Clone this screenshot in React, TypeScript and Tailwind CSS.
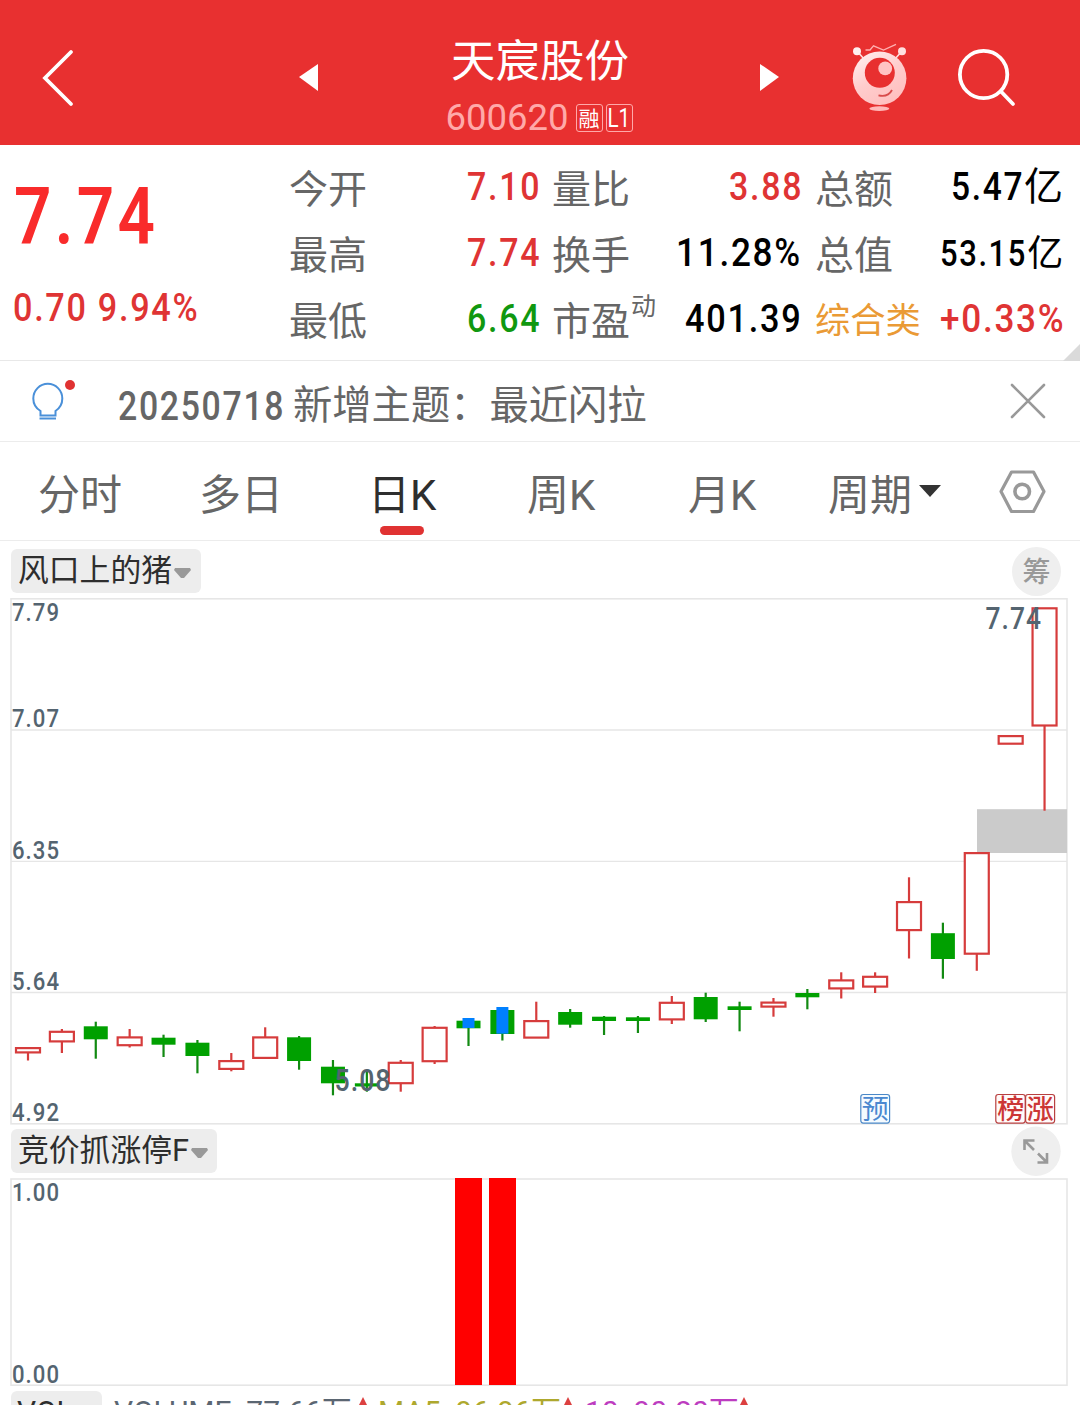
import { ReactNode } from "react";

type Candle = {
  kind: "up" | "down";
  top: number;
  bottom: number;
  high: number;
  low: number;
  mark?: [number, number];
};

const candles: Candle[] = [
  { kind: "up", top: 1047, bottom: 1053.5, high: 1047, low: 1060.5 },
  { kind: "up", top: 1030.7, bottom: 1042.5, high: 1029, low: 1053 },
  { kind: "down", top: 1026.3, bottom: 1039.3, high: 1021.7, low: 1058.7 },
  { kind: "up", top: 1036.3, bottom: 1046.3, high: 1029, low: 1047.5 },
  { kind: "down", top: 1037.7, bottom: 1044.7, high: 1034.7, low: 1057 },
  { kind: "down", top: 1042.7, bottom: 1056, high: 1040, low: 1073.3 },
  { kind: "up", top: 1060, bottom: 1070, high: 1053, low: 1071.3 },
  { kind: "up", top: 1036.3, bottom: 1059, high: 1027.3, low: 1059 },
  { kind: "down", top: 1037.3, bottom: 1061, high: 1036, low: 1069.7 },
  { kind: "down", top: 1066.7, bottom: 1083.3, high: 1060, low: 1095.3 },
  { kind: "down", top: 1083.3, bottom: 1086.5, high: 1071.3, low: 1091.7 },
  { kind: "up", top: 1061.7, bottom: 1084.3, high: 1060, low: 1091.7 },
  { kind: "up", top: 1026.7, bottom: 1062.3, high: 1026, low: 1064 },
  { kind: "down", top: 1020.7, bottom: 1028.3, high: 1018, low: 1046, mark: [1018, 1028] },
  { kind: "down", top: 1010, bottom: 1034, high: 1008, low: 1040.5, mark: [1007, 1033.7] },
  { kind: "up", top: 1020, bottom: 1038.7, high: 1001.7, low: 1038 },
  { kind: "down", top: 1012, bottom: 1024.7, high: 1009, low: 1027.7 },
  { kind: "down", top: 1016.7, bottom: 1021, high: 1016, low: 1035 },
  { kind: "down", top: 1017.3, bottom: 1021, high: 1016, low: 1033 },
  { kind: "up", top: 1001.7, bottom: 1020.5, high: 996, low: 1024 },
  { kind: "down", top: 997, bottom: 1019.3, high: 992.7, low: 1022 },
  { kind: "down", top: 1006.3, bottom: 1010, high: 1001.7, low: 1031.3 },
  { kind: "up", top: 1001.5, bottom: 1007.7, high: 998, low: 1016.7 },
  { kind: "down", top: 993, bottom: 997.3, high: 989, low: 1009.3 },
  { kind: "up", top: 979.3, bottom: 989.5, high: 972.3, low: 998.5 },
  { kind: "up", top: 975.7, bottom: 987.7, high: 972.3, low: 993 },
  { kind: "up", top: 901, bottom: 931.2, high: 877.3, low: 958.5 },
  { kind: "down", top: 933.2, bottom: 959, high: 922.7, low: 978.7 },
  { kind: "up", top: 852, bottom: 954.8, high: 852, low: 970.8 },
  { kind: "up", top: 735, bottom: 744.8, high: 736, low: 744 },
  { kind: "up", top: 607.2, bottom: 726.6, high: 608, low: 810.7 },
];

const candleX = (i: number) => 28 + i * 33.885;

function Num({ className = "", children }: { className?: string; children: ReactNode }) {
  return (
    <span className={`inline-block whitespace-nowrap leading-none font-medium tracking-[0.05em] ${className}`}>
      {children}
    </span>
  );
}

function Cell({ label, sup, children }: { label: string; sup?: string; children: ReactNode }) {
  return (
    <div className="flex h-[66px] items-center justify-between text-[39px] leading-none text-[#666]">
      <div className="flex items-start pt-[6px] whitespace-nowrap">
        <span>{label}</span>
        {sup && <span className="-mt-[9px] ml-[1px] text-[25px] leading-none">{sup}</span>}
      </div>
      {children}
    </div>
  );
}

function ChartLabel({ x, y, w, size = 25.7, children }: { x: number; y: number; w: number; size?: number; children: string }) {
  return (
    <text
      x={x}
      y={y}
      fontSize={size}
      textLength={w}
      lengthAdjust="spacingAndGlyphs"
      letterSpacing="1.2"
      fontWeight={500}
      fill="#546470"
    >
      {children}
    </text>
  );
}

function Header() {
  return (
    <header className="flex h-[145px] items-start bg-[#e83030] text-white">
      <svg className="mt-[46px] ml-[38px] h-[64px] w-[40px]" viewBox="0 0 40 64" fill="none">
        <path d="M33 6 L7 32 L33 58" stroke="white" strokeWidth="3.8" strokeLinecap="round" />
      </svg>
      <svg className="mt-[63px] ml-[221px] h-[29px] w-[20px]" viewBox="0 0 20 29">
        <path d="M0 14 L19 1 V28 Z" fill="white" />
      </svg>
      <div className="ml-[117px] flex w-[208px] flex-col items-center">
        <div className="mt-[38px] h-[48px] text-[44.5px] leading-[48px] whitespace-nowrap">天宸股份</div>
        <div className="mt-[18px] flex h-[28px] items-center gap-[3px]">
          <span className="mr-[4px] -ml-[2px] text-[36.5px] leading-none whitespace-nowrap text-[#ffa9a9]">
            600620
          </span>
          <span className="flex h-[28px] w-[27px] items-center justify-center rounded-[3px] border border-[#ffa9a9] pt-[2px] text-[21px] leading-none">
            融
          </span>
          <span className="flex h-[28px] w-[27px] items-center justify-center rounded-[3px] border border-[#ffa9a9] text-[25px] leading-none">
            <span className="inline-block scale-x-[0.82]">L1</span>
          </span>
        </div>
      </div>
      <svg className="mt-[63px] ml-[115px] h-[29px] w-[20px]" viewBox="0 0 20 29">
        <path d="M20 14 L1 1 V28 Z" fill="white" />
      </svg>
      <svg className="mt-[40px] ml-[70px] h-[74px] w-[60px]" viewBox="849 40 60 74" fill="none">
        <defs>
          <linearGradient id="robot" x1="0" y1="0" x2="0.6" y2="1">
            <stop offset="0" stopColor="#fff4f4" />
            <stop offset="0.55" stopColor="#ffcdcd" />
            <stop offset="1" stopColor="#ffc0c0" />
          </linearGradient>
        </defs>
        <path d="M857 51 L864 59 M902 51 L895 59" stroke="#ffdede" strokeWidth="1.6" />
        <circle cx="857" cy="51.2" r="4" fill="#fff0f0" />
        <circle cx="902" cy="51.2" r="4" fill="#ffe0e0" />
        <path d="M865.5 50 H870 L873.5 45.8 L883.5 50 L896 44.3" stroke="#ffb0b0" strokeWidth="1.3" />
        <circle cx="879.6" cy="78.3" r="26.8" fill="url(#robot)" />
        <circle cx="879.8" cy="72.8" r="15" fill="#e83030" />
        <circle cx="885.2" cy="68.4" r="6.9" fill="#ffc4c4" />
        <path d="M878.5 95.3 Q888 97.5 892 90" stroke="#d94b4b" strokeWidth="1.8" />
        <ellipse cx="879.3" cy="108.6" rx="10" ry="2.3" fill="#ffb8b8" />
      </svg>
      <svg className="mt-[44px] ml-[44px] h-[68px] w-[68px]" viewBox="953 44 68 68" fill="none">
        <circle cx="983.6" cy="74.5" r="23.7" stroke="white" strokeWidth="3.8" />
        <path d="M1001 91.5 L1013 104" stroke="white" strokeWidth="3.8" strokeLinecap="round" />
      </svg>
    </header>
  );
}

function Quote() {
  return (
    <section className="relative flex h-[216px] border-b border-[#e8e8e8] pt-[9px]">
      <div className="w-[289px] pl-[13px]">
        <div className="pt-[23px] pl-[1px]">
          <Num className="origin-left scale-x-[0.815] text-[80.5px] font-semibold text-[#f92b2b]">7.74</Num>
        </div>
        <div className="mt-[31px]">
          <Num className="origin-left scale-x-[0.9] text-[38px] text-[#df3434]">0.70 9.94%</Num>
        </div>
      </div>
      <div className="w-[250px]">
        <Cell label="今开">
          <Num className="-mr-[2px] origin-right scale-x-[0.87] text-[#df3434]">7.10</Num>
        </Cell>
        <Cell label="最高">
          <Num className="-mr-[2px] origin-right scale-x-[0.87] text-[#df3434]">7.74</Num>
        </Cell>
        <Cell label="最低">
          <Num className="-mr-[2px] origin-right scale-x-[0.87] text-[#109810]">6.64</Num>
        </Cell>
      </div>
      <div className="ml-[13px] w-[249px]">
        <Cell label="量比">
          <Num className="-mr-[2px] origin-right scale-x-[0.87] text-[#df3434]">3.88</Num>
        </Cell>
        <Cell label="换手">
          <Num className="-mr-[1px] origin-right scale-x-[0.9] text-black">11.28%</Num>
        </Cell>
        <Cell label="市盈" sup="动">
          <Num className="-mr-[1px] origin-right scale-x-[0.88] text-black">401.39</Num>
        </Cell>
      </div>
      <div className="ml-[14px] w-[248px]">
        <Cell label="总额">
          <Num className="-mr-[2px] text-black">
            <span className="inline-block origin-right scale-x-[0.86]">5.47</span>
            <span className="font-normal">亿</span>
          </Num>
        </Cell>
        <Cell label="总值">
          <Num className="-mr-[2px] pt-[2px] text-[36px] text-black">
            <span className="inline-block origin-right scale-x-[0.86]">53.15</span>
            <span className="font-normal">亿</span>
          </Num>
        </Cell>
        <div className="flex h-[66px] items-center justify-between leading-none">
          <span className="pt-[6px] text-[35.3px] text-[#ea9a35]">综合类</span>
          <Num className="-mr-[2px] origin-right scale-x-[0.9] text-[39px] text-[#df3434]">+0.33%</Num>
        </div>
      </div>
      <svg className="absolute right-0 bottom-[-1px] h-[17px] w-[17px]" viewBox="0 0 17 17">
        <path d="M17 0 V17 H0 Z" fill="#dadada" />
      </svg>
    </section>
  );
}

function Notice() {
  return (
    <section className="flex h-[81px] items-center border-b border-[#ececec] text-[#666]">
      <svg className="ml-[28px] h-[50px] w-[50px]" viewBox="28 376 50 50" fill="none">
        <path
          d="M40.5 415.5 H55.5 V411 C60 408 62.3 403.5 62.3 398.5 A14.4 14.6 0 0 0 33.3 398.5 C33.3 403.5 35.5 408 40.5 411 Z"
          stroke="#4a90d9"
          strokeWidth="2"
        />
        <path d="M39.5 418.5 H56" stroke="#4a90d9" strokeWidth="2" />
        <circle cx="70" cy="385" r="5" fill="#e03232" />
      </svg>
      <div className="ml-[40px] flex w-[892px] items-center pt-[12px] text-[39.3px] leading-none whitespace-nowrap">
        <span className="w-[175px]">
          <Num className="origin-left scale-x-[0.845] text-[40px]">20250718</Num>
        </span>
        <span>新增主题：最近闪拉</span>
      </div>
      <svg className="h-[36px] w-[36px]" viewBox="0 0 36 36">
        <path d="M2 2 L34 34 M34 2 L2 34" stroke="#999" strokeWidth="2.6" strokeLinecap="round" />
      </svg>
    </section>
  );
}

const tabs = [
  { name: "分时", className: "ml-[38px] w-[161px]" },
  { name: "多日", className: "w-[169px]" },
  { name: "日K", className: "w-[159px]", active: true },
  { name: "周K", className: "w-[161px]" },
  { name: "月K", className: "w-[140px]" },
  { name: "周期", className: "w-[91px]" },
];

function Tabs() {
  return (
    <nav className="flex h-[99px] items-center border-b border-[#ececec] text-[42px] leading-none whitespace-nowrap text-[#666]">
      {tabs.map((tab) => (
        <div key={tab.name} className={`relative pt-[10px] ${tab.className} ${tab.active ? "text-[#2e2e2e]" : ""}`}>
          {tab.name}
          {tab.active && (
            <span className="absolute top-[61px] left-[12px] h-[9px] w-[44px] rounded-full bg-[#e03232]" />
          )}
        </div>
      ))}
      <svg className="h-[12px] w-[22px]" viewBox="0 0 22 12">
        <path d="M0 0 H22 L11 12 Z" fill="#333" />
      </svg>
      <svg className="ml-[56px] h-[48px] w-[50px]" viewBox="997 466 50 48" fill="none">
        <path
          d="M1011.5 471 H1033.5 L1044 490.5 L1033.5 510.5 H1011.5 L1001 490.5 Z"
          stroke="#999"
          strokeWidth="3.2"
          strokeLinejoin="round"
        />
        <circle cx="1022.2" cy="490.5" r="7.3" stroke="#999" strokeWidth="3.6" />
      </svg>
    </nav>
  );
}

function Picker({ className, children }: { className?: string; children: ReactNode }) {
  return (
    <div
      className={`flex h-[44px] items-center rounded-[6px] bg-[#ededed] pl-[7px] text-[30.8px] leading-none whitespace-nowrap text-[#2e2e2e] ${className}`}
    >
      {children}
      <svg className="mt-[4px] ml-[2px] h-[10px] w-[17px]" viewBox="0 0 17 10">
        <path d="M1 0 H16 L17 2 L10 10 H7 L0 2 Z" fill="#999" />
      </svg>
    </div>
  );
}

function KLine() {
  return (
    <svg className="block h-[529px] w-[1080px]" viewBox="0 598 1080 529" fontFamily="Roboto, sans-serif">
      <g fill="none" stroke="#e6e6e6" strokeWidth="1.6">
        <rect x="11" y="598.8" width="1056" height="525" />
        <path d="M11 730 H1067 M11 861.3 H1067 M11 992.5 H1067" strokeWidth="1.3" />
      </g>
      <rect x="977" y="809.2" width="90" height="43.8" fill="#cbcbcb" />
      {candles.map((c, i) => {
        const x = candleX(i);
        if (c.kind === "up") {
          return (
            <g key={i} stroke="#d63c3c" strokeWidth="2.2" fill="white">
              <path d={`M${x} ${c.high} V${c.low}`} />
              <rect x={x - 12} y={c.top + 1.1} width="24" height={c.bottom - c.top - 2.2} />
            </g>
          );
        }
        return (
          <g key={i} fill="#00a000">
            <rect x={x - 1.1} y={c.high} width="2.2" height={c.low - c.high} fill="#128a12" />
            <rect x={x - 12} y={c.top} width="24" height={c.bottom - c.top} />
            {c.mark && (
              <rect x={x - 6} y={c.mark[0]} width="12" height={c.mark[1] - c.mark[0]} fill="#0080ff" />
            )}
          </g>
        );
      })}
      <ChartLabel x={12} y={621} w={48}>7.79</ChartLabel>
      <ChartLabel x={12} y={727} w={48}>7.07</ChartLabel>
      <ChartLabel x={12} y={859} w={48}>6.35</ChartLabel>
      <ChartLabel x={12} y={990} w={48}>5.64</ChartLabel>
      <ChartLabel x={12} y={1121} w={48}>4.92</ChartLabel>
      <ChartLabel x={334.5} y={1090.5} w={57} size={30.5}>5.08</ChartLabel>
      <ChartLabel x={985.5} y={629} w={56.5} size={30.5}>7.74</ChartLabel>
      <g fontSize="27" textAnchor="middle" fontFamily="'Noto Sans CJK SC', sans-serif">
        <rect x="860.8" y="1094.5" width="28.8" height="28.6" rx="2.5" fill="#f5fbff" stroke="#4a88c8" strokeWidth="1.2" />
        <text x="875.2" y="1118.5" fill="#4a88d0">预</text>
        <g fill="#fffafa" stroke="#b84040" strokeWidth="1.2">
          <rect x="995.8" y="1094.5" width="29.4" height="28.6" rx="2.5" />
          <rect x="1025.6" y="1094.5" width="29" height="28.6" rx="2.5" />
        </g>
        <g fill="#cc3636" fontWeight="500">
          <text x="1010.8" y="1118.5">榜</text>
          <text x="1040.3" y="1118.5">涨</text>
        </g>
      </g>
    </svg>
  );
}

function AuctionChart() {
  return (
    <svg className="block h-[213px] w-[1080px]" viewBox="0 1177 1080 213" fontFamily="Roboto, sans-serif">
      <rect x="11" y="1179" width="1056" height="206.2" fill="none" stroke="#e6e6e6" strokeWidth="1.6" />
      <g fill="#ff0000">
        <rect x="455" y="1178" width="27" height="207" />
        <rect x="489" y="1178" width="27" height="207" />
      </g>
      <ChartLabel x={12} y={1201} w={48}>1.00</ChartLabel>
      <ChartLabel x={12} y={1383} w={48}>0.00</ChartLabel>
    </svg>
  );
}

function UpArrow() {
  return (
    <svg className="h-[24px] w-[12px]" viewBox="0 0 12 24">
      <path d="M6 0 L12 12 H8 V24 H4 V12 H0 Z" fill="#dc4040" />
    </svg>
  );
}

function VolumeRow() {
  return (
    <div className="mt-[1px] flex h-[40px] items-start text-[30px] leading-none whitespace-nowrap">
      <div className="ml-[11px] h-[40px] w-[91px] rounded-[6px] bg-[#ededed] pt-[6px] pl-[6px] text-[#2e2e2e]">
        VOL
      </div>
      <div className="flex pt-[6px]">
        <div className="ml-[12px] w-[243px] text-[#5b6672]">VOLUME: 77.66万</div>
        <UpArrow />
        <div className="ml-[9px] w-[184px] text-[#aea82e]">MA5: 96.96万</div>
        <UpArrow />
        <div className="ml-[11px] w-[153px] text-[#bd3cc0]">10: 90.80万</div>
        <UpArrow />
      </div>
    </div>
  );
}

export default function App() {
  return (
    <div className="flex h-[1405px] w-[1080px] flex-col overflow-hidden bg-white font-['Roboto','Noto_Sans_CJK_SC',sans-serif] *:shrink-0">
      <Header />
      <Quote />
      <Notice />
      <Tabs />
      <div className="flex h-[57px] items-start justify-between pt-[8px] pr-[19px] pl-[11px]">
        <Picker className="w-[190px]">风口上的猪</Picker>
        <div className="-mt-[2px] flex h-[49px] w-[49px] items-center justify-center rounded-full bg-[#efefef] pt-[2px] text-[28px] leading-none font-medium text-[#999]">
          筹
        </div>
      </div>
      <KLine />
      <div className="flex h-[50px] items-start justify-between pt-[2px] pr-[19px] pl-[11px]">
        <Picker className="w-[206px]">竞价抓涨停F</Picker>
        <svg className="-mt-[3px] h-[50px] w-[50px]" viewBox="1012 1126 50 50" fill="none">
          <circle cx="1037" cy="1151.2" r="24.7" fill="#efefef" />
          <path
            d="M1035.5 1140.5 H1025.5 V1150 M1026 1141 L1035 1150 M1038.5 1162.5 H1048 V1153 M1048 1162.5 L1039 1153.5"
            stroke="#999"
            strokeWidth="2.6"
          />
        </svg>
      </div>
      <AuctionChart />
      <VolumeRow />
    </div>
  );
}
